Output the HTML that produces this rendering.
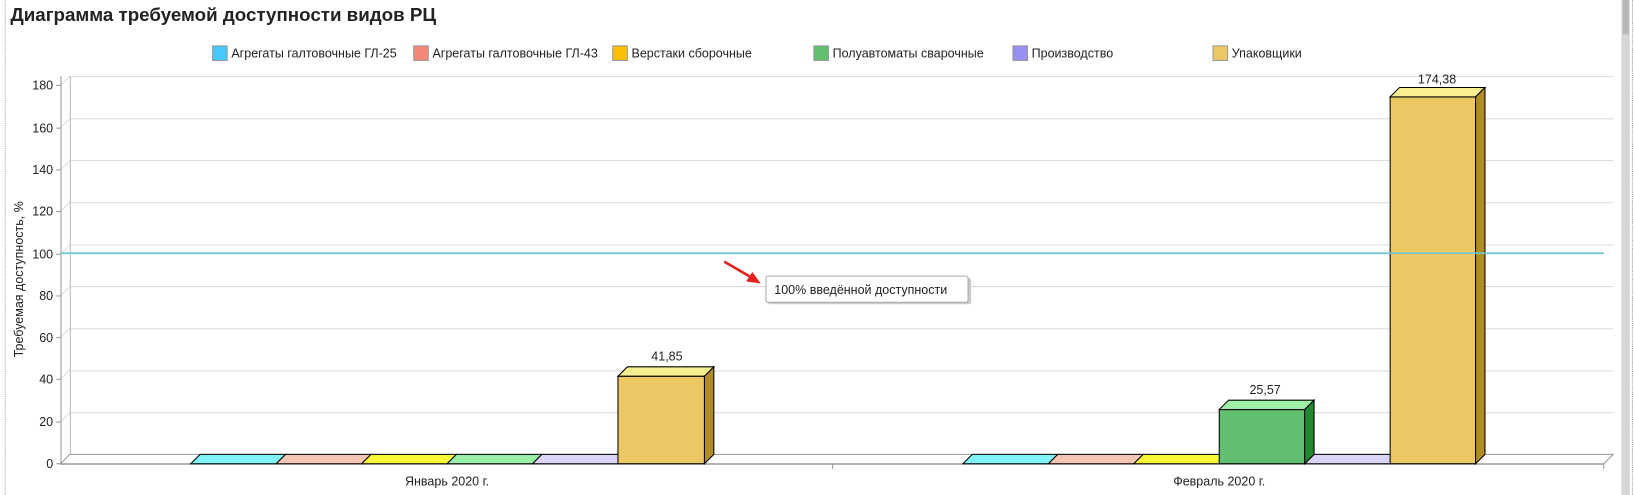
<!DOCTYPE html>
<html><head><meta charset="utf-8"><style>
html,body{margin:0;padding:0;background:#fff;overflow:hidden}
svg{display:block}
text{font-family:"Liberation Sans",Arial,sans-serif;fill:#222}
</style></head><body>
<svg width="1634" height="495" viewBox="0 0 1568 475" xmlns="http://www.w3.org/2000/svg">
<rect width="1568" height="475" fill="#fff"/>
<line x1="5" y1="0" x2="5" y2="475" stroke="#aaa" stroke-dasharray="1,1"/>
<rect x="1556" y="0" width="8" height="475" fill="#d6d6d6"/>
<rect x="1557" y="0" width="6" height="33" fill="#b8b8b8"/>
<line x1="1566.5" y1="0" x2="1566.5" y2="475" stroke="#999" stroke-dasharray="1,1"/>
<text x="10" y="20" font-size="18" font-weight="bold" fill="#333">Диаграмма требуемой доступности видов РЦ</text>
<g font-size="12">
<rect x="204" y="44" width="14" height="14" fill="#48c8f8" stroke="#999"/><text x="222" y="55">Агрегаты галтовочные ГЛ-25</text>
<rect x="397" y="44" width="14" height="14" fill="#f48878" stroke="#999"/><text x="415" y="55">Агрегаты галтовочные ГЛ-43</text>
<rect x="588" y="44" width="14" height="14" fill="#f8c000" stroke="#999"/><text x="606" y="55">Верстаки сборочные</text>
<rect x="781" y="44" width="14" height="14" fill="#60c070" stroke="#999"/><text x="799" y="55">Полуавтоматы сварочные</text>
<rect x="972" y="44" width="14" height="14" fill="#9890f0" stroke="#999"/><text x="990" y="55">Производство</text>
<rect x="1164" y="44" width="14" height="14" fill="#ecc864" stroke="#999"/><text x="1182" y="55">Упаковщики</text>
</g>
<g stroke="#e2dae2" stroke-width="1">
<line x1="67" y1="73.5" x2="1548" y2="73.5"/>
<line x1="67" y1="114" x2="1548" y2="114"/>
<line x1="67" y1="154" x2="1548" y2="154"/>
<line x1="67" y1="194.5" x2="1548" y2="194.5"/>
<line x1="67" y1="235" x2="1548" y2="235"/>
<line x1="67" y1="275" x2="1548" y2="275"/>
<line x1="67" y1="315.5" x2="1548" y2="315.5"/>
<line x1="67" y1="356" x2="1548" y2="356"/>
<line x1="67" y1="396" x2="1548" y2="396"/>
<line x1="58" y1="82" x2="67" y2="73"/>
<line x1="58" y1="123" x2="67" y2="114"/>
<line x1="58" y1="163" x2="67" y2="154"/>
<line x1="58" y1="203" x2="67" y2="194"/>
<line x1="58" y1="244" x2="67" y2="235"/>
<line x1="58" y1="284" x2="67" y2="275"/>
<line x1="58" y1="324" x2="67" y2="315"/>
<line x1="58" y1="364" x2="67" y2="355"/>
<line x1="58" y1="405" x2="67" y2="396"/>
</g>
<line x1="67.5" y1="73" x2="67.5" y2="436" stroke="#bbb"/>
<polygon points="58,445 67,436 1548,436 1539,445" fill="#fff" stroke="#999"/>
<line x1="58.5" y1="73" x2="58.5" y2="446" stroke="#999"/>
<line x1="58" y1="445.5" x2="1539" y2="445.5" stroke="#999"/>
<g stroke="#999"><line x1="54" y1="82" x2="58" y2="82"/><line x1="54" y1="123" x2="58" y2="123"/><line x1="54" y1="163" x2="58" y2="163"/><line x1="54" y1="203" x2="58" y2="203"/><line x1="54" y1="244" x2="58" y2="244"/><line x1="54" y1="284" x2="58" y2="284"/><line x1="54" y1="324" x2="58" y2="324"/><line x1="54" y1="364" x2="58" y2="364"/><line x1="54" y1="405" x2="58" y2="405"/><line x1="54" y1="445" x2="58" y2="445"/>
<line x1="799" y1="445" x2="799" y2="450"/><line x1="1539" y1="445" x2="1539" y2="450"/></g>
<g font-size="12" text-anchor="end">
<text x="51" y="86">180</text><text x="51" y="127">160</text><text x="51" y="167">140</text><text x="51" y="207">120</text><text x="51" y="248">100</text><text x="51" y="288">80</text><text x="51" y="328">60</text><text x="51" y="368">40</text><text x="51" y="409">20</text><text x="51" y="449">0</text>
</g>
<text transform="translate(22,268) rotate(-90)" font-size="12" text-anchor="middle">Требуемая доступность, %</text>
<g stroke="#000" stroke-width="1">
<polygon points="183,445 192,436 274,436 265,445" fill="#80f4f8"/>
<polygon points="265,445 274,436 356,436 347,445" fill="#f4c4b4"/>
<polygon points="347,445 356,436 438,436 429,445" fill="#f8f838"/>
<polygon points="429,445 438,436 520,436 511,445" fill="#98f0a8"/>
<polygon points="511,445 520,436 602,436 593,445" fill="#dcd4f8"/>
<polygon points="924,445 933,436 1015,436 1006,445" fill="#80f4f8"/>
<polygon points="1006,445 1015,436 1097,436 1088,445" fill="#f4c4b4"/>
<polygon points="1088,445 1097,436 1179,436 1170,445" fill="#f8f838"/>
<polygon points="1252,445 1261,436 1343,436 1334,445" fill="#dcd4f8"/>
<rect x="593" y="361" width="83" height="84" fill="#ecc864"/>
<polygon points="593,361 602,352 685,352 676,361" fill="#f8f090"/>
<polygon points="676,361 685,352 685,436 676,445" fill="#b08c28"/>
<rect x="1170" y="393" width="82" height="52" fill="#60c070"/>
<polygon points="1170,393 1179,384 1261,384 1252,393" fill="#a0f0a8"/>
<polygon points="1252,393 1261,384 1261,436 1252,445" fill="#208830"/>
<rect x="1334" y="93" width="82" height="352" fill="#ecc864"/>
<polygon points="1334,93 1343,84 1425,84 1416,93" fill="#f8f090"/>
<polygon points="1416,93 1425,84 1425,436 1416,445" fill="#b08c28"/>
</g>
<line x1="58" y1="243" x2="1539" y2="243" stroke="#6cc8cc" stroke-width="1.6"/>
<g font-size="12" text-anchor="middle">
<text x="640" y="346">41,85</text><text x="1214" y="378">25,57</text><text x="1379" y="80">174,38</text>
<text x="429" y="466">Январь 2020 г.</text><text x="1170" y="466">Февраль 2020 г.</text>
</g>
<line x1="695" y1="251" x2="724" y2="268" stroke="#e82020" stroke-width="2.5"/>
<polygon points="730,272 716,270 722,261" fill="#e82020"/>
<rect x="737" y="267" width="195" height="25" rx="2" fill="#ccc"/>
<rect x="735" y="265" width="194" height="25" rx="2" fill="#fff" stroke="#aaa"/>
<text x="743" y="282" font-size="12" fill="#333">100% введённой доступности</text>
</svg>
</body></html>
